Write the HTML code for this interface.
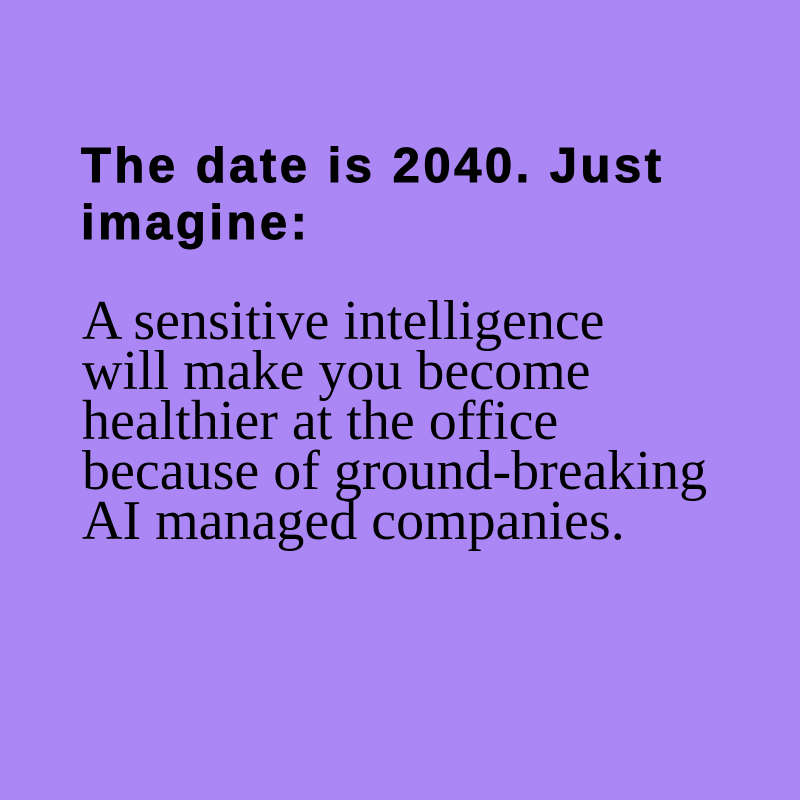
<!DOCTYPE html>
<html><head><style>
html,body{margin:0;padding:0;}
body{width:800px;height:800px;background:#ab87f6;position:relative;overflow:hidden;}
h1{position:absolute;left:81px;top:138px;margin:0;font:bold 49px/57px "Liberation Sans",Arial,sans-serif;letter-spacing:3.5px;-webkit-text-stroke:1px #000;color:#000;width:720px;white-space:nowrap;}
p{position:absolute;left:82px;top:296px;margin:0;font:56px/50px "Liberation Serif","Times New Roman",serif;color:#000;white-space:nowrap;}
</style></head><body>
<h1>The date is 2040. Just<br>imagine:</h1>
<p>A sensitive intelligence<br>will make you become<br>healthier at the office<br>because of ground-breaking<br>AI managed companies.</p>
</body></html>
